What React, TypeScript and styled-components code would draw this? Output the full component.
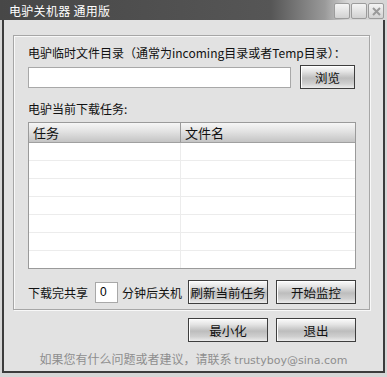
import React from "react";
import styled, { createGlobalStyle } from "styled-components";

const GlobalStyle = createGlobalStyle`
  html, body {
    margin: 0;
    padding: 0;
    background: #d8d8d8;
  }
  body {
    font-family: "Noto Sans CJK SC", "Liberation Sans", sans-serif;
    font-size: 12px;
  }
`;

const Window = styled.div`
  width: 387px;
  height: 377px;
  display: flex;
  flex-direction: column;
  background: #d6d6d6;
  box-sizing: border-box;
`;

const TitleBar = styled.div`
  height: 20px;
  display: flex;
  align-items: center;
  justify-content: space-between;
  padding: 0 3px 0 9px;
  background: linear-gradient(to right, #474747 0%, #565656 70%, #9a9a9a 84%, #d6d6d6 90%);
  color: #ffffff;
  font-size: 12px;
`;

const TitleText = styled.span`
  letter-spacing: 0.3px;
`;

const TitleButtons = styled.div`
  display: flex;
  gap: 1px;
  align-items: center;
  padding-top: 2px;
`;

const TitleButton = styled.div`
  width: 16px;
  height: 16px;
  box-sizing: border-box;
  border: 1px solid #9c9c9c;
  border-radius: 2px;
  background: linear-gradient(to bottom, #f4f4f4, #d2d2d2);
  display: flex;
  align-items: center;
  justify-content: center;
`;

const Frame = styled.div`
  flex: 1;
  margin: 0 2px 4px 2px;
  border: 2px solid #3c3c3c;
  border-top: none;
  background: #e2e2e2;
  display: flex;
  flex-direction: column;
  padding: 15px 13px 0 9px;
`;

const GroupBox = styled.div`
  height: 275px;
  box-sizing: border-box;
  border: 1px solid #a6a6a6;
  box-shadow: inset 1px 1px 0 #f8f8f8, 1px 1px 0 #f8f8f8;
  padding: 9px 13px 0 14px;
  display: flex;
  flex-direction: column;
`;

const Label = styled.div`
  color: #111;
  line-height: 16px;
  height: 16px;
  white-space: nowrap;
`;

const PathRow = styled.div`
  display: flex;
  align-items: center;
  gap: 9px;
  margin-top: 4px;
`;

const TextBox = styled.div<{ $w: number }>`
  flex-shrink: 0;
  width: ${(p) => p.$w}px;
  height: 21px;
  box-sizing: border-box;
  background: #fff;
  border: 1px solid #a8a8a8;
  padding: 1px 4px;
  line-height: 17px;
  font-family: "Liberation Sans", sans-serif;
  font-size: 12px;
`;

const Button = styled.div<{ $w: number }>`
  flex-shrink: 0;
  width: ${(p) => p.$w}px;
  height: 24px;
  box-sizing: border-box;
  border: 1px solid #3e3e3e;
  background: linear-gradient(to bottom, #fbfbfb 0%, #e4e4e4 25%, #bdbdbd 55%, #cfcfcf 80%, #ececec 100%);
  box-shadow: inset 1px 1px 0 #ffffff;
  display: flex;
  align-items: center;
  justify-content: center;
  color: #111;
  font-size: 12.5px;
  white-space: nowrap;
`;

const TaskLabel = styled(Label)`
  margin-top: 12px;
`;

const List = styled.div`
  margin-top: 5px;
  height: 147px;
  box-sizing: border-box;
  border: 1px solid #9a9a9a;
  background: #fff;
  display: flex;
  flex-direction: column;
  overflow: hidden;
`;

const HeaderRow = styled.div`
  display: grid;
  grid-template-columns: 151px 1fr;
  height: 19px;
  flex-shrink: 0;
  background: linear-gradient(to bottom, #f6f6f6 0%, #e2e2e2 45%, #c4c4c4 100%);
  border-bottom: 1px solid #a0a0a0;
`;

const HeaderCell = styled.div`
  padding-left: 4px;
  line-height: 19px;
  font-size: 13px;
  color: #111;
  & + & {
    border-left: 1px solid #9a9a9a;
  }
`;

const Row = styled.div`
  display: grid;
  grid-template-columns: 151px 1fr;
  height: 17px;
  flex-shrink: 0;
  border-bottom: 1px solid #ececec;
`;

const Cell = styled.div`
  & + & {
    border-left: 1px solid #ececec;
  }
`;

const ControlRow = styled.div`
  display: flex;
  align-items: center;
  margin-top: 11px;
`;

const InlineText = styled.span<{ $ml?: number }>`
  flex-shrink: 0;
  margin-left: ${(p) => p.$ml ?? 0}px;
  font-size: 12px;
  color: #111;
  white-space: nowrap;
`;

const ButtonRow = styled.div`
  display: flex;
  justify-content: flex-end;
  gap: 8px;
  margin-top: 8px;
  padding-right: 14px;
`;

const Footer = styled.div`
  margin-top: 8px;
  text-align: center;
  color: #8e8e8e;
  font-size: 12px;
  padding-left: 4px;
  white-space: nowrap;
`;

const Mail = styled.span`
  font-family: "DejaVu Sans", "Liberation Sans", sans-serif;
  font-size: 11px;
`;

const CloseIcon = () => (
  <svg width="9" height="9" viewBox="0 0 9 9">
    <path d="M1 1 L8 8 M8 1 L1 8" stroke="#9a9a9a" strokeWidth="2" />
  </svg>
);

export default function App() {
  const rows = Array.from({ length: 8 });
  return (
    <>
      <GlobalStyle />
      <Window>
        <TitleBar>
          <TitleText>电驴关机器 通用版</TitleText>
          <TitleButtons>
            <TitleButton />
            <TitleButton />
            <TitleButton>
              <CloseIcon />
            </TitleButton>
          </TitleButtons>
        </TitleBar>
        <Frame>
          <GroupBox>
            <Label>电驴临时文件目录（通常为incoming目录或者Temp目录）：</Label>
            <PathRow>
              <TextBox $w={263} />
              <Button $w={55}>浏览</Button>
            </PathRow>
            <TaskLabel>电驴当前下载任务:</TaskLabel>
            <List>
              <HeaderRow>
                <HeaderCell>任务</HeaderCell>
                <HeaderCell>文件名</HeaderCell>
              </HeaderRow>
              {rows.map((_, i) => (
                <Row key={i}>
                  <Cell />
                  <Cell />
                </Row>
              ))}
            </List>
            <ControlRow>
              <InlineText>下载完共享</InlineText>
              <TextBox $w={23} style={{ marginLeft: 7 }}>0</TextBox>
              <InlineText $ml={4}>分钟后关机</InlineText>
              <Button $w={80} style={{ marginLeft: 6 }}>刷新当前任务</Button>
              <Button $w={80} style={{ marginLeft: 8 }}>开始监控</Button>
            </ControlRow>
          </GroupBox>
          <ButtonRow>
            <Button $w={80}>最小化</Button>
            <Button $w={80}>退出</Button>
          </ButtonRow>
          <Footer>
            如果您有什么问题或者建议，请联系 <Mail>trustyboy@sina.com</Mail>
          </Footer>
        </Frame>
      </Window>
    </>
  );
}
